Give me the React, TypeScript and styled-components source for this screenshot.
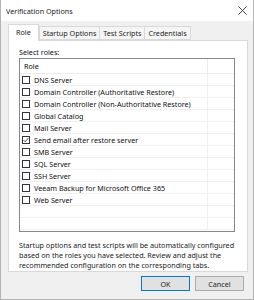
import React, { useState } from 'react';
import styled, { createGlobalStyle } from 'styled-components';

const GlobalStyle = createGlobalStyle`
  html, body {
    margin: 0;
    padding: 0;
    background: #ffffff;
  }
  body {
    font-family: 'Noto Sans', 'Open Sans', sans-serif;
    font-size: 7.2px;
    color: #111;
  }
`;

const roles = [
  { name: 'DNS Server', checked: false },
  { name: 'Domain Controller (Authoritative Restore)', checked: false },
  { name: 'Domain Controller (Non-Authoritative Restore)', checked: false },
  { name: 'Global Catalog', checked: false },
  { name: 'Mail Server', checked: false },
  { name: 'Send email after restore server', checked: true },
  { name: 'SMB Server', checked: false },
  { name: 'SQL Server', checked: false },
  { name: 'SSH Server', checked: false },
  { name: 'Veeam Backup for Microsoft Office 365', checked: false },
  { name: 'Web Server', checked: false },
];

const tabs = ['Role', 'Startup Options', 'Test Scripts', 'Credentials'];

const App = () => {
  const [items, setItems] = useState(roles);
  const [activeTab, setActiveTab] = useState(0);

  const toggleRole = (index: number) => {
    setItems(items => items.map((item, i) => (i === index ? { ...item, checked: !item.checked } : item)));
  };

  return (
    <>
      <GlobalStyle />
      <Window>
        <TitleBar>
          <Title>Verification Options</Title>
          <CloseButton>
            <svg width="9" height="9" viewBox="0 0 9 9">
              <path d="M0.5 0.5 L8.5 8.5 M8.5 0.5 L0.5 8.5" stroke="#333" strokeWidth="0.9" />
            </svg>
          </CloseButton>
        </TitleBar>
        <Body>
          <TabStrip>
            {tabs.map((tab, i) => (
              <Tab key={tab} active={i === activeTab} onClick={() => setActiveTab(i)}>
                {tab}
              </Tab>
            ))}
          </TabStrip>
          <Panel>
            <Label>Select roles:</Label>
            <ListBox>
              <HeaderRow>
                <HeaderCell>Role</HeaderCell>
                <Filler />
              </HeaderRow>
              {items.map((item, i) => (
                <Row key={item.name} onClick={() => toggleRole(i)}>
                  <Cell>
                    <CheckBox>
                      {item.checked && (
                        <svg width="6" height="6" viewBox="0 0 6 6">
                          <path d="M0.6 3.1 L2.2 4.7 L5.4 1.0" fill="none" stroke="#333" strokeWidth="0.9" />
                        </svg>
                      )}
                    </CheckBox>
                    {item.name}
                  </Cell>
                  <Filler />
                </Row>
              ))}
              <Row>
                <Cell />
                <Filler />
              </Row>
              <Row>
                <Cell />
                <Filler />
              </Row>
            </ListBox>
            <Description>
              Startup options and test scripts will be automatically configured based on the roles you have
              selected. Review and adjust the recommended configuration on the corresponding tabs.
            </Description>
          </Panel>
          <Footer>
            <Button primary>OK</Button>
            <Button>Cancel</Button>
          </Footer>
        </Body>
      </Window>
    </>
  );
};

const Window = styled.div`
  width: 254px;
  height: 300px;
  box-sizing: border-box;
  border: 1px solid #b4b4b4;
  border-top: none;
  background: #f0f0f0;
  display: flex;
  flex-direction: column;
  overflow: hidden;
`;

const TitleBar = styled.div`
  height: 21px;
  background: #ffffff;
  display: flex;
  align-items: center;
  justify-content: space-between;
  padding: 0 0 0 5px;
  flex-shrink: 0;
`;

const Title = styled.div`
  color: #222;
`;

const CloseButton = styled.div`
  width: 22px;
  height: 21px;
  display: flex;
  align-items: center;
  justify-content: center;
`;

const Body = styled.div`
  flex: 1;
  display: flex;
  flex-direction: column;
  padding: 3px 5px 0 7px;
`;

const TabStrip = styled.div`
  display: flex;
  align-items: flex-end;
  height: 16px;
  position: relative;
  z-index: 1;
`;

const Tab = styled.div<{ active?: boolean }>`
  height: ${props => (props.active ? '17px' : '14px')};
  box-sizing: border-box;
  padding: 0 ${props => (props.active ? '7px' : '3px')};
  margin-bottom: ${props => (props.active ? '-1px' : '0')};
  margin-right: ${props => (props.active ? '0' : '-1px')};
  border: 1px solid #d9d9d9;
  border-bottom: ${props => (props.active ? 'none' : '1px solid #d9d9d9')};
  background: ${props => (props.active ? '#ffffff' : '#f5f5f5')};
  line-height: ${props => (props.active ? '15px' : '12px')};
  color: #222;
  white-space: nowrap;
  cursor: default;
`;

const Panel = styled.div`
  background: #ffffff;
  border: 1px solid #d9d9d9;
  padding: 5px 12px 0 10px;
  height: 232px;
  box-sizing: border-box;
`;

const Label = styled.div`
  line-height: 12px;
`;

const ListBox = styled.div`
  border: 1px solid #828790;
  height: 174px;
  box-sizing: border-box;
  overflow: hidden;
`;

const HeaderRow = styled.div`
  display: flex;
  height: 15px;
  box-sizing: border-box;
  border-bottom: 1px solid #ececec;
`;

const HeaderCell = styled.div`
  width: 188px;
  box-sizing: border-box;
  padding-left: 4px;
  line-height: 14px;
  border-right: 1px solid #ececec;
`;

const Filler = styled.div`
  flex: 1;
`;

const Row = styled.div`
  display: flex;
  height: 12px;
  box-sizing: border-box;
  border-bottom: 1px solid #f0f0f0;
`;

const Cell = styled.div`
  width: 188px;
  box-sizing: border-box;
  display: flex;
  align-items: center;
  padding-left: 2px;
  white-space: nowrap;
  border-right: 1px solid #f0f0f0;
`;

const CheckBox = styled.span`
  width: 8px;
  height: 8px;
  box-sizing: border-box;
  border: 1px solid #333;
  background: #fff;
  margin-right: 4px;
  display: inline-flex;
  align-items: center;
  justify-content: center;
  flex-shrink: 0;
`;

const Description = styled.div`
  margin-top: 8px;
  line-height: 10px;
  color: #222;
`;

const Footer = styled.div`
  display: flex;
  justify-content: flex-end;
  gap: 5px;
  padding: 4px 4px 0 0;
`;

const Button = styled.div<{ primary?: boolean }>`
  width: 49px;
  height: 15px;
  box-sizing: border-box;
  border: 1px solid ${props => (props.primary ? '#0078d7' : '#adadad')};
  background: #e1e1e1;
  display: flex;
  align-items: center;
  justify-content: center;
  color: #222;
`;

export default App;
